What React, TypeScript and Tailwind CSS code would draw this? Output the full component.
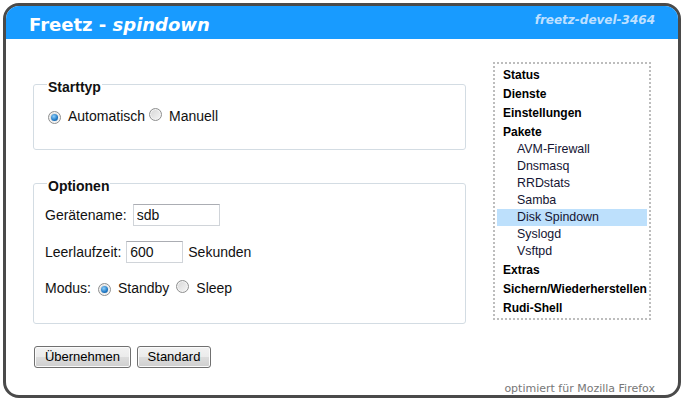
import { ReactNode } from 'react';

const Radio = ({ checked }: { checked?: boolean }) => (
  <span className="inline-flex items-center justify-center w-[13px] h-[13px] shrink-0 rounded-full border border-[#8e8f8f] bg-[linear-gradient(135deg,#d6d6d6,#f6f6f6)] shadow-[inset_0_0_0_1px_#f4f4f4]">
    {checked && (
      <span className="block w-[7px] h-[7px] rounded-full bg-[radial-gradient(circle_at_40%_35%,#8fd0fb,#1f78c4_60%,#0c4f8c)]" />
    )}
  </span>
);

const Box = ({ title, children, className }: { title: string; children: ReactNode; className?: string }) => (
  <fieldset className={`border border-[#d3dce3] rounded-[3px] pl-[11px] ${className ?? ''}`}>
    <legend className="ml-[2px] px-[1px] pt-[7px] font-bold text-[14px] leading-[15px]">{title}</legend>
    {children}
  </fieldset>
);

const Button = ({ label, w }: { label: string; w: string }) => (
  <button className={`${w} h-[22px] border border-[#707070] rounded-[3px] text-[13px] text-black bg-[linear-gradient(#f2f2f2,#ebebeb_50%,#dddddd_50%,#cfcfcf)] shadow-[inset_0_0_0_1px_#fbfbfb]`}>
    {label}
  </button>
);

const menu: [string, 'main' | 'sub', boolean?][] = [
  ['Status', 'main'],
  ['Dienste', 'main'],
  ['Einstellungen', 'main'],
  ['Pakete', 'main'],
  ['AVM-Firewall', 'sub'],
  ['Dnsmasq', 'sub'],
  ['RRDstats', 'sub'],
  ['Samba', 'sub'],
  ['Disk Spindown', 'sub', true],
  ['Syslogd', 'sub'],
  ['Vsftpd', 'sub'],
  ['Extras', 'main'],
  ['Sichern/Wiederherstellen', 'main'],
  ['Rudi-Shell', 'main'],
];

export default function App() {
  return (
    <div className="w-[684px] h-[401px] bg-white pt-[3px] pl-[3px] font-['Liberation_Sans',Arial,sans-serif] text-[#111]">
      <div className="w-[678px] h-[395px] border-[3px] border-[#4a4a4a] rounded-[16px] overflow-hidden flex flex-col bg-white">
        <div className="h-[33px] bg-[#189bff] flex justify-between px-[23px] font-['DejaVu_Sans',Verdana,sans-serif] font-bold shrink-0">
          <div className="text-white text-[18px] leading-[18px] pt-[10px]">
            Freetz - <i>spindown</i>
          </div>
          <div className="text-[#bfe0ff] italic text-[12px] leading-[12px] pt-[8px]">freetz-devel-3464</div>
        </div>

        <div className="flex pl-[27px]">
          <div className="w-[433px] mt-[34px]">
            <Box title="Starttyp" className="pb-[22px]">
              <div className="h-[22px] mt-[10px] flex items-center text-[14px]">
                <span className="ml-[3px] mr-[7px]"><Radio checked /></span>
                <span>Automatisch</span>
                <span className="ml-[4px] mr-[7px]"><Radio /></span>
                <span>Manuell</span>
              </div>
            </Box>

            <Box title="Optionen" className="mt-[22px] pb-[24px]">
              <div className="text-[14px]">
                <div className="h-[22px] mt-[10px] flex items-center">
                  <span>Gerätename:</span>
                  <input
                    defaultValue="sdb"
                    className="ml-[6px] w-[87px] h-[22px] border border-[#d0d4d9] border-t-[#abadb3] px-[3px] text-[14px] outline-none"
                  />
                </div>
                <div className="h-[22px] mt-[15px] flex items-center">
                  <span>Leerlaufzeit:</span>
                  <input
                    defaultValue="600"
                    className="ml-[5px] w-[57px] h-[22px] border border-[#d0d4d9] border-t-[#abadb3] px-[3px] text-[14px] outline-none"
                  />
                  <span className="ml-[5px]">Sekunden</span>
                </div>
                <div className="h-[22px] mt-[14px] flex items-center">
                  <span>Modus:</span>
                  <span className="ml-[7px] mr-[7px]"><Radio checked /></span>
                  <span>Standby</span>
                  <span className="ml-[7px] mr-[7px]"><Radio /></span>
                  <span>Sleep</span>
                </div>
              </div>
            </Box>

            <div className="flex gap-[6px] mt-[22px] ml-[1px]">
              <Button label="Übernehmen" w="w-[97px]" />
              <Button label="Standard" w="w-[74px]" />
            </div>
          </div>

          <div className="ml-[27px] mt-[23px] w-[158px] h-[258px] border-2 border-dotted border-[#bdbdbd] p-[2px] pt-[2px]">
            {menu.map(([label, kind, active]) =>
              kind === 'main' ? (
                <div key={label} className="h-[19px] leading-[19px] pl-[6px] text-[12px] font-bold text-black whitespace-nowrap">
                  {label}
                </div>
              ) : (
                <div
                  key={label}
                  className={`h-[17px] leading-[17px] pl-[20px] text-[12.4px] text-[#141432] ${active ? 'bg-[#bde0fc]' : ''} ${label === 'AVM-Firewall' ? '-mt-[1px]' : ''} ${label === 'Vsftpd' ? 'mb-[1px]' : ''}`}
                >
                  {label}
                </div>
              )
            )}
          </div>
        </div>

        <div className="mt-auto text-right pr-[23px] text-[11px] leading-[13px] text-[#777] font-['DejaVu_Sans',Verdana,sans-serif]">
          optimiert für Mozilla Firefox
        </div>
      </div>
    </div>
  );
}
